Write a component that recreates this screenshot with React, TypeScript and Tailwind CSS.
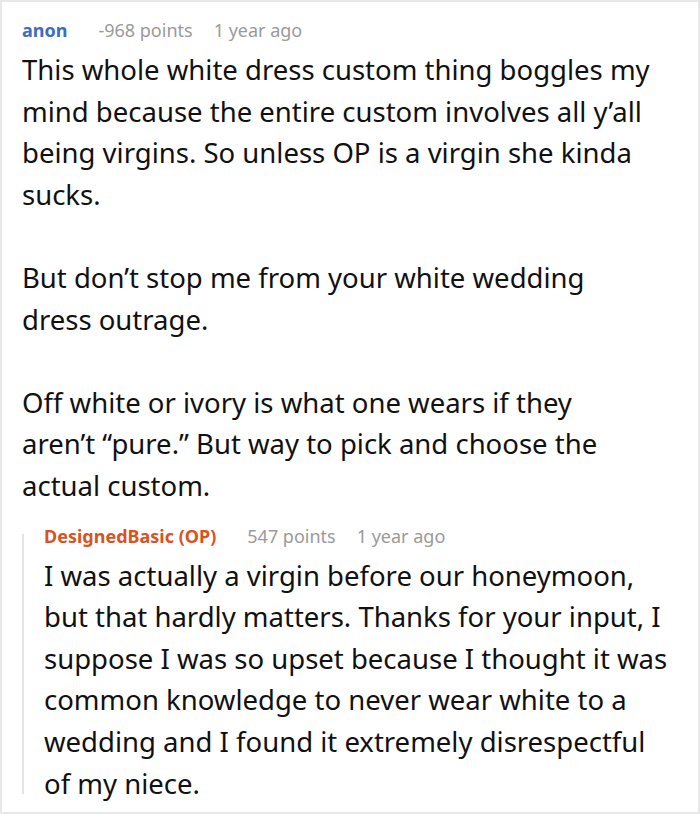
import React from 'react';

const Meta: React.FC<{ name: string; color: string; points: string }> = ({ name, color, points }) => (
  <div className="flex items-center h-6 text-[18px] leading-6 whitespace-nowrap">
    <span className={`font-bold ${color} mr-[31px]`}>{name}</span>
    <span className="text-[#9a9a9a] mr-[21px]">{points}</span>
    <span className="text-[#9a9a9a]">1 year ago</span>
  </div>
);

const Lines: React.FC<{ lines: string[]; className?: string }> = ({ lines, className = '' }) => (
  <p className={`whitespace-nowrap ${className}`}>
    {lines.map((l, i) => (
      <React.Fragment key={i}>
        {l}
        {i < lines.length - 1 && <br />}
      </React.Fragment>
    ))}
  </p>
);

export default function App() {
  return (
    <div
      className="w-[700px] h-[814px] bg-white border-2 border-[#e8e8e8] overflow-hidden pl-[20px] pr-[2px] pt-[16px]"
      style={{ fontFamily: '"Noto Sans", "Open Sans", sans-serif' }}
    >
      <Meta name="anon" color="text-[#3d6cc0]" points="-968 points" />
      <div className="mt-[7px] text-[27.5px] leading-[41.6px] text-[#111]">
        <Lines
          lines={[
            'This whole white dress custom thing boggles my',
            'mind because the entire custom involves all y’all',
            'being virgins. So unless OP is a virgin she kinda',
            'sucks.',
          ]}
        />
        <Lines className="mt-[41.6px]" lines={['But don’t stop me from your white wedding', 'dress outrage.']} />
        <Lines
          className="mt-[41.6px]"
          lines={[
            'Off white or ivory is what one wears if they',
            'aren’t “pure.” But way to pick and choose the',
            'actual custom.',
          ]}
        />
      </div>
      <div className="flex mt-[17px]">
        <div className="w-[2px] bg-[#e4e4e4] mt-[10px] h-[260px] shrink-0" />
        <div className="pl-[20px]">
          <Meta name="DesignedBasic (OP)" color="text-[#d9531e]" points="547 points" />
          <Lines
            className="mt-[7px] text-[27.5px] leading-[41.6px] text-[#111]"
            lines={[
              'I was actually a virgin before our honeymoon,',
              'but that hardly matters. Thanks for your input, I',
              'suppose I was so upset because I thought it was',
              'common knowledge to never wear white to a',
              'wedding and I found it extremely disrespectful',
              'of my niece.',
            ]}
          />
        </div>
      </div>
    </div>
  );
}
